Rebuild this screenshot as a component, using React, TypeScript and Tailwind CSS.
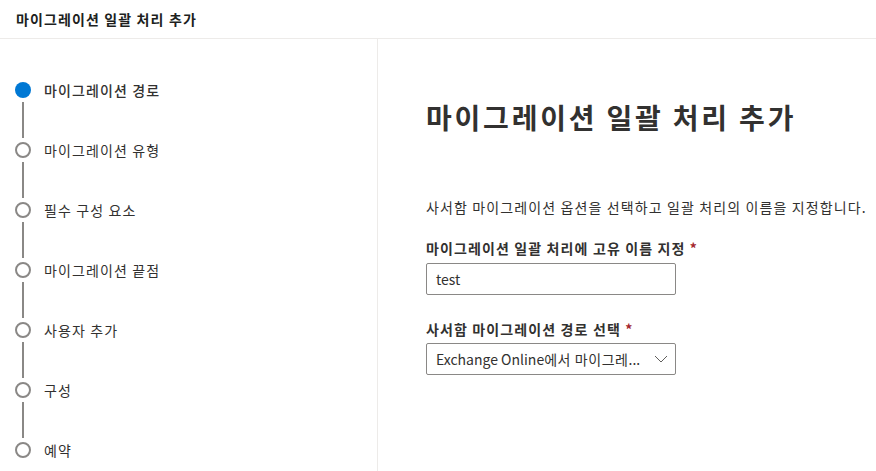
import React from "react";

const steps = [
  "마이그레이션 경로",
  "마이그레이션 유형",
  "필수 구성 요소",
  "마이그레이션 끝점",
  "사용자 추가",
  "구성",
  "예약",
];

export default function App() {
  return (
    <div
      className="w-[876px] h-[471px] overflow-hidden bg-white text-[#323130] tracking-[0.07em]"
      style={{ fontFamily: '"Noto Sans CJK KR", "Noto Sans", sans-serif' }}
    >
      <div className="h-[39px] border-b border-[#edebe9] px-4 flex items-center text-[14px] font-semibold text-[#201f1e]">
        마이그레이션 일괄 처리 추가
      </div>
      <div className="flex h-[432px]">
        <div className="w-[378px] shrink-0 border-r border-[#edebe9] pt-[43px] pl-[15px]">
          {steps.map((s, i) => (
            <div key={s} className="flex flex-col">
              <div className="flex items-center h-[16px]">
                {i === 0 ? (
                  <div className="w-[16px] h-[16px] rounded-full bg-[#0078d4]" />
                ) : (
                  <div className="w-[16px] h-[16px] rounded-full border-2 border-[#8a8886] bg-white" />
                )}
                <span
                  className={
                    "ml-[13px] text-[14px] leading-[20px] " +
                    (i === 0 ? "font-medium text-[#323130]" : "text-[#323130]")
                  }
                >
                  {s}
                </span>
              </div>
              {i < steps.length - 1 && (
                <div className="ml-[7px] w-[2px] h-[36px] my-[4px] bg-[#8a8886]" />
              )}
            </div>
          ))}
        </div>
        <div className="flex-1 pl-[48px] pt-[60px]">
          <h1 className="text-[28px] leading-[36px] font-semibold text-[#323130] tracking-[0.1em]">
            마이그레이션 일괄 처리 추가
          </h1>
          <p className="mt-[62px] text-[14px] leading-[20px] text-[#323130] whitespace-nowrap">
            사서함 마이그레이션 옵션을 선택하고 일괄 처리의 이름을 지정합니다.
          </p>
          <div className="mt-[21px] text-[14px] leading-[20px] font-semibold text-[#323130]">
            마이그레이션 일괄 처리에 고유 이름 지정 <span className="text-[#a4262c]">*</span>
          </div>
          <div className="mt-[5px] w-[250px] h-[32px] border border-[#8a8886] rounded-[2px] flex items-center px-[9px] text-[14px] text-[#323130] tracking-normal">
            test
          </div>
          <div className="mt-[24px] text-[14px] leading-[20px] font-semibold text-[#323130]">
            사서함 마이그레이션 경로 선택 <span className="text-[#a4262c]">*</span>
          </div>
          <div className="mt-[4px] w-[250px] h-[32px] border border-[#8a8886] rounded-[2px] flex items-center pl-[9px] pr-[7px] text-[14px] text-[#323130]">
            <span className="flex-1 whitespace-nowrap tracking-[0.04em]">
              <span className="tracking-normal">Exchange Online</span>에서 마이그레<span className="tracking-normal">...</span>
            </span>
            <svg width="14" height="8" viewBox="0 0 14 8" className="ml-[6px] shrink-0">
              <path d="M1 1 L7 7 L13 1" fill="none" stroke="#605e5c" strokeWidth="1" />
            </svg>
          </div>
        </div>
      </div>
    </div>
  );
}
